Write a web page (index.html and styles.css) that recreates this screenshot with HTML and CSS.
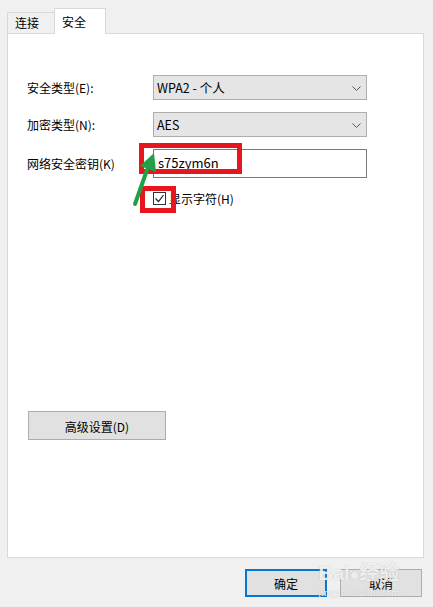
FILE: index.html
```html
<!DOCTYPE html>
<html lang="zh-CN">
<head>
<meta charset="utf-8">
<link rel="stylesheet" href="styles.css">
</head>
<body>
<div class="dialog">
  <div class="tabs">
    <div class="tab">连接</div>
    <div class="tab active">安全</div>
  </div>
  <div class="panel">
    <div class="form">
      <label class="label">安全类型(E):</label>
      <div class="select"><span>WPA2 - 个人</span><svg class="chev" width="9" height="5" viewBox="0 0 9 5"><path d="M0.5 0.5 L4.5 4.5 L8.5 0.5" fill="none" stroke="#555" stroke-width="1"/></svg></div>
      <label class="label">加密类型(N):</label>
      <div class="select"><span>AES</span><svg class="chev" width="9" height="5" viewBox="0 0 9 5"><path d="M0.5 0.5 L4.5 4.5 L8.5 0.5" fill="none" stroke="#555" stroke-width="1"/></svg></div>
      <label class="label">网络安全密钥(K)</label>
      <div class="input">s75zym6n</div>
      <div></div>
      <div class="check">
        <span class="box"><svg width="11" height="11" viewBox="0 0 11 11"><path d="M1.5 5.5 L4.5 8.5 L9.5 2" fill="none" stroke="#222" stroke-width="1.2"/></svg></span>
        <span>显示字符(H)</span>
      </div>
    </div>
    <div class="adv-wrap"><div class="btn adv">高级设置(D)</div></div>
  </div>
  <div class="footer">
    <div class="btn ok">确定</div>
    <div class="btn">取消</div>
  </div>
  <svg class="annot" width="433" height="607" viewBox="0 0 433 607">
    <rect x="141.5" y="145.5" width="98" height="26" fill="none" stroke="#e6161f" stroke-width="5"/>
    <rect x="142.5" y="188.5" width="31" height="22" fill="none" stroke="#e6161f" stroke-width="5"/>
    <path d="M135 204 L147 170" stroke="#22a045" stroke-width="4" stroke-linecap="round" fill="none"/>
    <path d="M154 153 L156 172 L140 166 Z" fill="#22a045"/>
  </svg>
  <div class="watermark"><span class="wm-big">Bai<span class="paw">●</span>经验</span><span class="wm-small">jingyan.baidu.com</span></div>
</div>
</body>
</html>
```
FILE: styles.css
```css
html, body {
  margin: 0;
  padding: 0;
}
body {
  background: #f0f0f0;
  font-family: "Noto Sans CJK SC", "Liberation Sans", sans-serif;
  font-size: 12px;
  color: #000;
}
.dialog {
  position: relative;
  width: 433px;
  height: 607px;
  overflow: hidden;
}
.tabs {
  display: flex;
  align-items: flex-end;
  height: 25px;
  padding: 8px 0 0 7px;
  position: relative;
  z-index: 2;
}
.tab {
  box-sizing: border-box;
  height: 21px;
  width: 48px;
  padding-left: 7px;
  line-height: 20px;
  background: #f0f0f0;
  border: 1px solid #d9d9d9;
  border-bottom: none;
}
.tab.active {
  width: 52px;
  padding-left: 7px;
  line-height: 26px;
  background: #fff;
  border-left: 1px solid #d9d9d9;
  margin-left: -1px;
  margin-bottom: -1px;
  height: 26px;
}
.panel {
  box-sizing: border-box;
  margin-left: 7px;
  width: 417px;
  height: 525px;
  background: #fff;
  border: 1px solid #d9d9d9;
  padding: 41px 0 0 19px;
  display: flex;
  flex-direction: column;
}
.form {
  display: grid;
  grid-template-columns: 126px 214px;
  grid-template-rows: 25px 25px 29px 13px;
  row-gap: 12px;
  align-items: center;
}
.form .check { margin-top: 4px; }
.label {
  line-height: 16px;
}
.select {
  box-sizing: border-box;
  height: 25px;
  background: #e5e5e5;
  border: 1px solid #adadad;
  display: flex;
  align-items: center;
  justify-content: space-between;
  padding: 0 5px 0 3px;
  font-size: 12.5px;
}
.chev { margin-top: 1px; }
.input {
  box-sizing: border-box;
  height: 29px;
  border: 1px solid #7a7a7a;
  background: #fff;
  padding-left: 4px;
  line-height: 26px;
  font-size: 13px;
}
.check {
  display: flex;
  align-items: center;
  gap: 3px;
  height: 13px;
}
.box {
  box-sizing: border-box;
  width: 13px;
  height: 13px;
  border: 1px solid #333;
  display: flex;
  align-items: center;
  justify-content: center;
  background: #fff;
}
.adv-wrap {
  margin-top: 208px;
  padding-left: 1px;
}
.btn {
  box-sizing: border-box;
  background: #e1e1e1;
  border: 1px solid #adadad;
  display: flex;
  align-items: center;
  justify-content: center;
  height: 28px;
  width: 82px;
}
.adv {
  width: 138px;
  height: 29px;
  padding-top: 1px;
}
.footer {
  display: flex;
  justify-content: flex-end;
  gap: 13px;
  padding: 11px 11px 0 0;
}
.btn.ok {
  border: 2px solid #0078d7;
}
.annot {
  position: absolute;
  left: 0;
  top: 0;
  z-index: 5;
}
.watermark {
  position: absolute;
  left: 318px;
  top: 562px;
  z-index: 6;
  display: flex;
  flex-direction: column;
  align-items: center;
  color: rgba(255,255,255,0.8);
  text-shadow: 0 0 1px rgba(140,140,140,0.6);
  pointer-events: none;
}
.wm-big {
  font-family: "Liberation Sans", "Noto Sans CJK SC", sans-serif;
  font-size: 20px;
  font-weight: bold;
  line-height: 22px;
}
.paw { font-size: 16px; }
.wm-small {
  font-family: "Liberation Serif", serif;
  font-size: 11px;
  line-height: 12px;
}
```
